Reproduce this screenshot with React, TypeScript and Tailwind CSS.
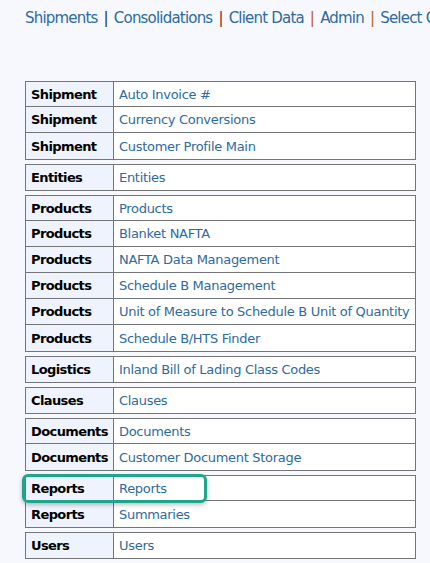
const groups: [string, string[]][] = [
  ["Shipment", ["Auto Invoice #", "Currency Conversions", "Customer Profile Main"]],
  ["Entities", ["Entities"]],
  [
    "Products",
    [
      "Products",
      "Blanket NAFTA",
      "NAFTA Data Management",
      "Schedule B Management",
      "Unit of Measure to Schedule B Unit of Quantity",
      "Schedule B/HTS Finder",
    ],
  ],
  ["Logistics", ["Inland Bill of Lading Class Codes"]],
  ["Clauses", ["Clauses"]],
  ["Documents", ["Documents", "Customer Document Storage"]],
  ["Reports", ["Reports", "Summaries"]],
  ["Users", ["Users"]],
];

const nav: [string, string][] = [
  ["Shipments", "text-[#1c2a5c]"],
  ["Consolidations", "text-[#8c1c1c]"],
  ["Client Data", "text-[#b5600f]"],
  ["Admin", "text-[#b5600f]"],
  ["Select Client", ""],
];

export default function App() {
  return (
    <div className="min-h-[563px] w-[430px] overflow-hidden bg-[#f7f8fd] font-['DejaVu_Sans',sans-serif]">
      <div className="flex h-[36px] items-center whitespace-nowrap pl-[25px] text-[15px] tracking-[-0.8px] text-[#2d6aa0]">
        {nav.map(([label, sepColor]) => (
          <span key={label} className="flex shrink-0 items-center">
            <span>{label}</span>
            {sepColor && <span className={`mx-[6px] ${sepColor}`}>|</span>}
          </span>
        ))}
      </div>

      <div className="mt-[45px] flex flex-col gap-[4px] pl-[25px]">
        {groups.map(([cat, items]) => (
          <div key={cat} className="relative w-[391px]">
            <div className="flex flex-col divide-y divide-[#747578] border border-[#747578] text-[13px]">
              {items.map((item) => (
                <div key={item} className="flex h-[26px] items-center [&:first-child]:h-[25px]">
                  <div className="flex h-full w-[88px] shrink-0 items-center border-r border-[#747578] bg-[#eef3fd] px-[5px] pt-[1px] font-bold tracking-[-0.6px] text-black">
                    {cat}
                  </div>
                  <div className="flex h-full flex-1 items-center bg-white px-[5px] pt-[1px] tracking-[-0.3px] text-[#2d6aa0]">
                    {item}
                  </div>
                </div>
              ))}
            </div>
            {cat === "Reports" && (
              <div className="pointer-events-none absolute left-[-3px] top-[-1px] h-[29px] w-[185px] rounded-[6px] border-[3px] border-[#1fa58b] shadow-[0_2px_4px_rgba(0,0,0,0.25)]" />
            )}
          </div>
        ))}
      </div>
    </div>
  );
}
